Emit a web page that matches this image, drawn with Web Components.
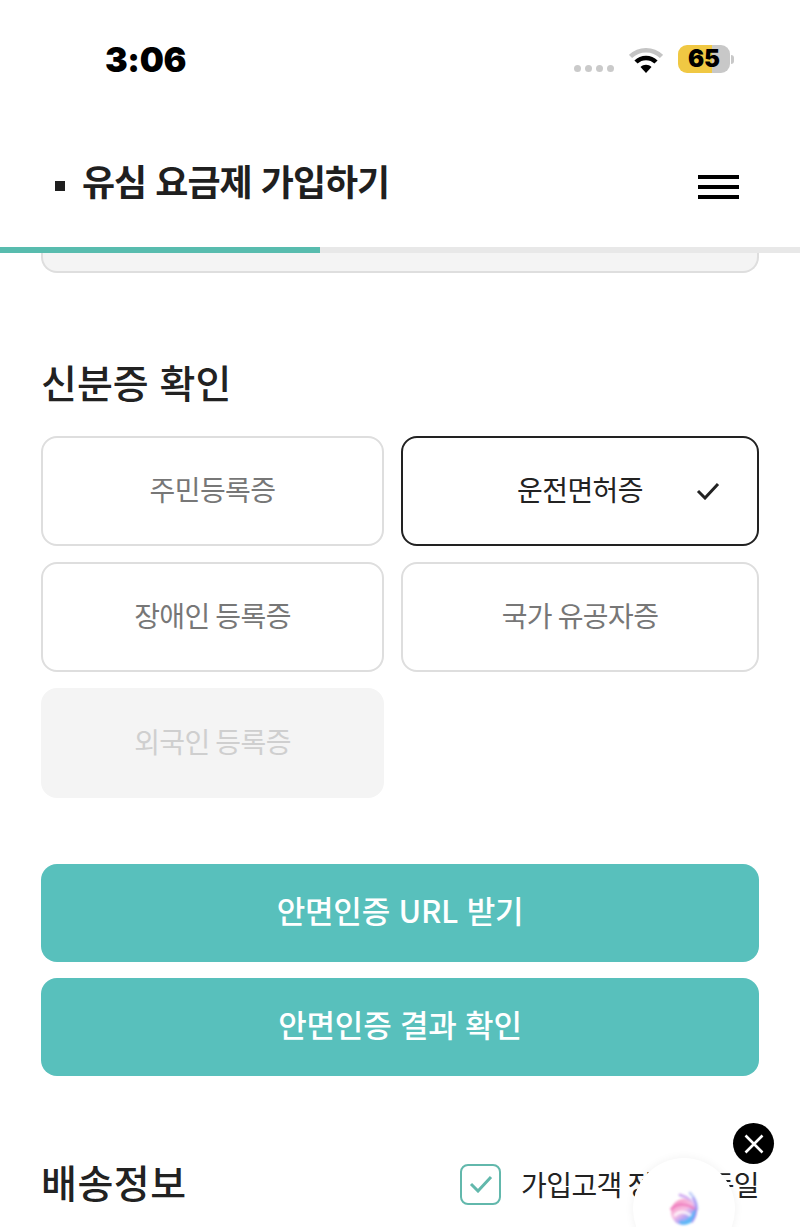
<!doctype html>
<html lang="ko"><head><meta charset="utf-8"><title>유심 요금제 가입하기</title>
<style>
html,body{margin:0;padding:0;background:#fff;}
body{width:800px;height:1227px;overflow:hidden;position:relative;font-family:"Noto Sans CJK KR","Noto Sans",sans-serif;color:#222;}
</style></head><body>
<app-page></app-page>
<script>
function def(name,css,html){
  customElements.define(name,class extends HTMLElement{
    constructor(){super();this.attachShadow({mode:'open'}).innerHTML='<style>'+css+'</style>'+html;}
  });
}
def('status-bar',`
:host{display:flex;height:100px;box-sizing:border-box;padding:20px 66px 0 105px;align-items:center;justify-content:space-between}
.t{font:900 34px/1 Inter,"Liberation Sans",sans-serif;color:#000;letter-spacing:-.4px;margin-top:-1px}
.r{display:flex;align-items:center;}
.d{display:flex;gap:4px;margin-right:15px;margin-top:17px}
.d i{width:7px;height:7px;border-radius:50%;background:#cacaca}
svg{display:block}
.b{margin-left:15px;width:52px;height:28px;border-radius:9px;background:linear-gradient(90deg,#f0c843 0 66%,#c8c8c8 66%);display:flex;align-items:center;justify-content:center;font:900 24px/1 Inter,"Liberation Sans",sans-serif;color:#000;margin-top:-2px}
.n{width:3px;height:9px;background:#c8c8c8;border-radius:0 3px 3px 0;margin-left:1px;margin-top:-2px}
`,`<span class="t">3:06</span><div class="r"><div class="d"><i></i><i></i><i></i><i></i></div>
<svg width="34" height="27" viewBox="0 0 34 27"><path d="M1.500 9.500C10 1 24 1 32.500 9.500" fill="none" stroke="#c4c4c4" stroke-width="4.500"/><path d="M7 15c5.500-5.500 14.500-5.500 20 0" fill="none" stroke="#000" stroke-width="4.500"/><path d="M11.500 20c3-3 8-3 11 0L17 26z" fill="#000"/></svg>
<div class="b">65</div><div class="n"></div></div>`);
def('app-header',`
:host{display:flex;height:147px;box-sizing:border-box;padding:0 61px 0 55px;align-items:center;justify-content:space-between;position:relative}
.l{display:flex;align-items:center;margin-top:14px}
.s{width:10px;height:10px;background:#1f1f1f;margin-right:17px;margin-top:11px}
h1{margin:0;font:700 36px/1.2 "Noto Sans CJK KR",sans-serif;color:#1f1f1f;letter-spacing:-1px;white-space:nowrap}
.m{display:flex;flex-direction:column;gap:6px;margin-top:27px}
.m i{display:block;width:41px;height:4px;background:#000}
`,`<div class="l"><span class="s"></span><h1><slot></slot></h1></div><div class="m"><i></i><i></i><i></i></div>`);
def('progress-bar',`
:host{display:block;height:6px;background:#e8e8e8}
i{display:block;width:320px;height:6px;background:#58bcae}
`,`<i></i>`);
def('card-stub',`
:host{display:block;height:20px;box-sizing:border-box;margin:0 41px;background:#f4f4f4;border:2px solid #dedede;border-top:0;border-radius:0 0 16px 16px}
`,``);
def('section-title',`
:host{display:block;font:500 39px/1.2 "Noto Sans CJK KR",sans-serif;color:#222;white-space:nowrap;}
`,`<slot></slot>`);
def('id-option',`
:host{display:flex;align-items:center;justify-content:center;position:relative;box-sizing:border-box;height:110px;border:2px solid #dedede;border-radius:16px;background:#fff;color:#777;font:400 28px/1 "Noto Sans CJK KR",sans-serif;letter-spacing:-.6px;word-spacing:-1.500px;white-space:nowrap;padding-bottom:4px}
:host([selected]){border-color:#222;color:#222}
:host([disabled]){border-color:#f4f4f4;background:#f4f4f4;color:#cfcfcf}
svg{display:none;position:absolute;right:37px;top:44px}
:host([selected]) svg{display:block}
`,`<slot></slot><svg width="24" height="18" viewBox="0 0 24 18"><path d="M2 9l7 7L22 2" fill="none" stroke="#222" stroke-width="3"/></svg>`);
def('id-grid',`
:host{display:grid;grid-template-columns:343px 358px;gap:16px 17px;}
`,`<slot></slot>`);
def('action-button',`
:host{display:flex;align-items:center;justify-content:center;height:98px;border-radius:16px;background:#58c0bc;color:#fff;font:500 31px/1 "Noto Sans CJK KR",sans-serif;letter-spacing:-.2px;padding-bottom:6px;box-sizing:border-box;white-space:nowrap}
`,`<slot></slot>`);
def('delivery-row',`
:host{display:flex;align-items:center;justify-content:space-between;}
.c{display:flex;align-items:center;gap:20px;font:400 28px/1 "Noto Sans CJK KR",sans-serif;color:#222;letter-spacing:-.6px;word-spacing:-1.500px;white-space:nowrap}
.b{box-sizing:border-box;width:41px;height:41px;border:2.500px solid #62b8ac;border-radius:8px;display:flex;align-items:center;justify-content:center}
::slotted(section-title){margin-top:-6px;letter-spacing:.5px}
`,`<slot></slot><div class="c"><span class="b"><svg width="24" height="18" viewBox="0 0 24 18"><path d="M2 9l7 7L22 2" fill="none" stroke="#62b8ac" stroke-width="3"/></svg></span><slot name="label"></slot></div>`);
def('float-widget',`
:host{display:block;position:absolute;left:0;top:0;width:800px;height:1227px;overflow:hidden;pointer-events:none}
.x{position:absolute;left:733px;top:1123px;width:41px;height:41px;border-radius:50%;background:#000;display:flex;align-items:center;justify-content:center}
.o{position:absolute;left:633px;top:1158px;width:102px;height:102px;border-radius:50%;background:#fff;box-shadow:0 0 10px rgba(0,0,0,.06)}
.o svg{position:absolute;left:31px;top:30px}
`,`<div class="o"><svg width="40" height="44" viewBox="0 0 40 44" fill="none">
<defs>
<filter id="bl" x="-30%" y="-30%" width="160%" height="160%"><feGaussianBlur stdDeviation="1.100"/></filter>
<linearGradient id="gb" x1=".2" y1=".2" x2=".75" y2=".95"><stop offset="0" stop-color="#f7a6cf"/><stop offset=".4" stop-color="#f7bfe4"/><stop offset=".65" stop-color="#b9a4f4"/><stop offset="1" stop-color="#55c4f8"/></linearGradient>
</defs>
<g filter="url(#bl)">
<path d="M16 7C23 9 29 13 31 21" stroke="#c497ee" stroke-width="3" stroke-linecap="round" opacity=".75"/>
<path d="M26 5C31 10 33 15 33 21" stroke="#9fb4f5" stroke-width="3" stroke-linecap="round" opacity=".6"/>
<ellipse cx="19.500" cy="24" rx="12.500" ry="13" fill="url(#gb)"/>
<path d="M7.500 21C13 15 24 15 31 22" stroke="#ee77bc" stroke-width="3" stroke-linecap="round" opacity=".75"/>
<path d="M11 27C15 23 21 23 26 27" stroke="#fff" stroke-width="3" stroke-linecap="round" opacity=".75"/>
<path d="M17 34C23 36 29 30 31 23" stroke="#58b8f8" stroke-width="3.500" stroke-linecap="round" opacity=".8"/>
<path d="M29 10C34 18 33 27 28 34" stroke="#a07cf0" stroke-width="2" stroke-linecap="round" opacity=".7"/>
</g></svg></div>
<div class="x"><svg width="22" height="22" viewBox="0 0 22 22"><path d="M2.500 2.500l17 17M19.500 2.500l-17 17" stroke="#fff" stroke-width="2.600"/></svg></div>`);
def('app-page',`
:host{display:block;height:1227px;overflow:hidden;}
main{display:block;padding:0 41px;}
section-title.a{margin-top:85px}
id-grid{margin-top:31px}
.btns{display:flex;flex-direction:column;gap:16px;margin-top:66px}
delivery-row{margin-top:88px}
`,`<status-bar></status-bar><app-header>유심 요금제 가입하기</app-header><progress-bar></progress-bar><card-stub></card-stub>
<main>
<section-title class="a">신분증 확인</section-title>
<id-grid><id-option>주민등록증</id-option><id-option selected>운전면허증</id-option><id-option>장애인 등록증</id-option><id-option>국가 유공자증</id-option><id-option disabled>외국인 등록증</id-option></id-grid>
<div class="btns"><action-button>안면인증 URL 받기</action-button><action-button>안면인증 결과 확인</action-button></div>
<delivery-row><section-title>배송정보</section-title><span slot="label">가입고객 정보와 동일</span></delivery-row>
</main><float-widget></float-widget>`);
</script></body></html>
